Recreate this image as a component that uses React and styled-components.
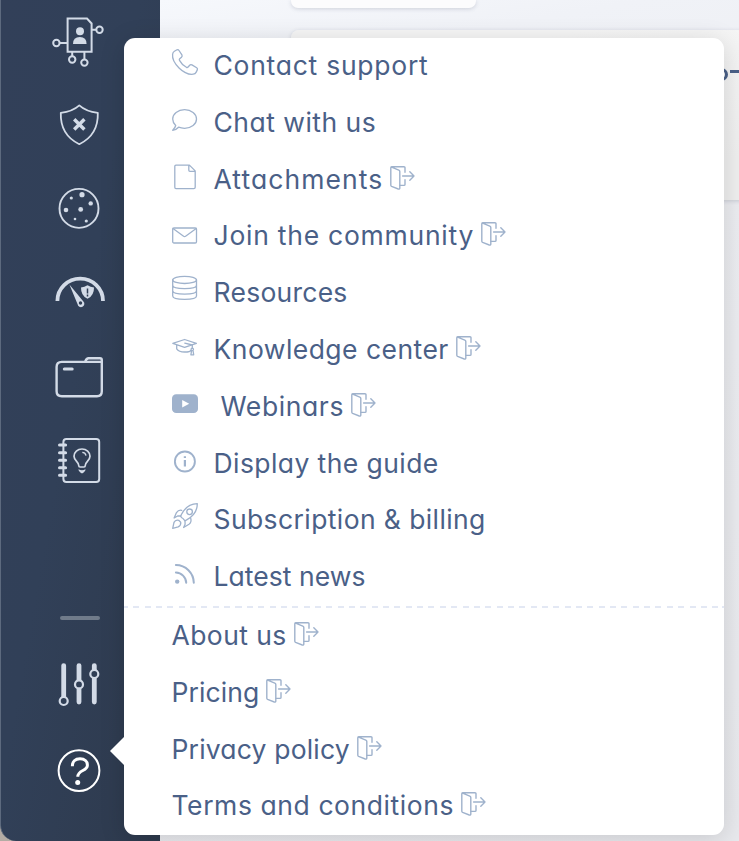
import React from "react";
import styled, { createGlobalStyle } from "styled-components";

const GlobalStyle = createGlobalStyle`
  *, *::before, *::after { box-sizing: border-box; }
  body { margin: 0; overflow: hidden; }
`;

const Page = styled.div`
  position: relative;
  display: flex;
  width: 739px;
  height: 841px;
  overflow: hidden;
  background: #b3aca4;
  font-family: Inter, "Open Sans", sans-serif;
`;

const Sidebar = styled.nav`
  display: flex;
  flex: none;
  flex-direction: column;
  width: 160px;
  height: 841px;
  border-left: 1px solid #5d6a7e;
  border-bottom-left-radius: 16px;
  background: linear-gradient(100deg, #324059 0%, #314058 45%, #2e3a4d 100%);
`;

const NavItem = styled.a`
  display: flex;
  flex: none;
  align-items: center;
  justify-content: center;
  height: ${(p) => p.$height || 84}px;
  margin-left: -1px;
  color: ${(p) => (p.$active ? "#ffffff" : "#d3dbe7")};

  &:first-child { margin-top: -1px; }
`;

const NavIcon = styled.svg`
  width: 60px;
  height: 60px;
  fill: none;
  stroke: currentColor;
  stroke-width: ${(p) => p.$stroke || 2};
  stroke-linejoin: round;
`;

const NavDivider = styled.hr`
  flex: none;
  width: 40px;
  height: 4px;
  margin: 113px 0 21px 59px;
  border: 0;
  border-radius: 2px;
  background: #707b8a;
`;

const Main = styled.main`
  display: flex;
  flex: 1;
  flex-direction: column;
  gap: 22px;
  min-width: 0;
  padding-left: 131px;
  background: linear-gradient(170deg, #f6f8fc 0%, #f0f2f7 9%, #ecedf1 30%, #e8e9ed 100%);
`;

const Card = styled.section`
  display: flex;
  flex: none;
  align-items: flex-start;
  width: ${(p) => p.$width}px;
  height: ${(p) => p.$height}px;
  border-radius: ${(p) => p.$radius};
  background: ${(p) => p.$fill};
  box-shadow: 0 1px 4px rgba(60, 70, 100, 0.2);
`;

const ChartNode = styled.span`
  flex: none;
  width: 13px;
  height: 13px;
  margin: 38px 2px 0 424px;
  border: 3px solid #4a6087;
  border-radius: 50%;
`;

const ChartLine = styled.span`
  width: 30px;
  height: 3px;
  margin-top: 40px;
  background: #4a6087;
`;

const Menu = styled.aside`
  position: absolute;
  top: 38px;
  left: 124px;
  width: 600px;
  height: 797px;
  border-radius: 11px;
  background: #ffffff;
  box-shadow: 0 4px 26px rgba(0, 0, 0, 0.14);

  &::before {
    content: "";
    position: absolute;
    top: 699px;
    left: -14px;
    border: solid transparent;
    border-width: 14px 14px 14px 0;
    border-right-color: #ffffff;
  }
`;

const MenuList = styled.ul`
  margin: 0;
  padding: 0;
  list-style: none;
`;

const MenuDivider = styled.div`
  height: 2px;
  background: repeating-linear-gradient(90deg, #e3e8f4 0 6px, transparent 6px 11.35px);
  background-position-x: -2px;
`;

const MenuRow = styled.li`
  display: flex;
  align-items: flex-start;
  height: 56.8px;
  padding-left: 48px;
`;

const RowIcon = styled.svg`
  flex: none;
  width: 26px;
  height: 26px;
  margin: 11px 16px 0 0;
  overflow: visible;
  fill: none;
  stroke: #9fb2cc;
  stroke-width: 1.3;
  stroke-linejoin: round;
  stroke-linecap: round;
`;

const Label = styled.span`
  margin-left: ${(p) => (p.$indent ? 6.5 : -0.5)}px;
  color: #4a6087;
  font-size: 26.5px;
  line-height: 55px;
  letter-spacing: ${(p) => p.$tracking}px;
  font-feature-settings: "cv11";
  white-space: nowrap;
`;

const ExitGlyph = styled.svg`
  flex: none;
  width: 25px;
  height: 24px;
  margin: 14px 0 0 7px;
  fill: none;
  stroke: #9fb2cc;
  stroke-width: 1.4;
  stroke-linejoin: round;
  stroke-linecap: round;
`;

const ExitIcon = () => (
  <ExitGlyph viewBox="0 0 25 24">
    <path d="M15 6.3V1.8Q15 .8 14 .8H1.6Q.8.8.8 1.7V19.2Q.8 20 1.6 20.4L8.3 23Q9.8 23.4 9.8 22V5.5Q9.8 4.5 8.8 4.1L1 .9" />
    <path d="M10 19.4H14Q15 19.4 15 18.4V13.7M12.6 10H24M19.8 5.8L24 10L19.8 14.2" />
  </ExitGlyph>
);

const icons = {
  phone: (
    <path d="M2.4 2.2L5 .8Q6.2.3 7 1.5L9.9 5.9Q10.6 7.2 9.5 8.2L7.7 9.8Q7 10.5 7.5 11.4Q9.8 15.8 14.4 18.3Q15.4 18.8 16.1 18L17.7 16.2Q18.6 15.2 19.9 15.9L24.7 18.7Q25.9 19.5 25.3 20.9L24.2 23.1Q23.3 25 21.2 25.2C12 26.4-.5 14 .6 5.2Q.8 3.1 2.4 2.2Z" />
  ),
  chat: (
    <path d="M12.6 3.7C19.4 3.7 24.5 7.8 24.5 13S19.4 22.3 12.6 22.3Q9.3 22.3 6.6 21.2Q3.8 24.1.7 24.3Q3.2 21.9 3.7 19.5Q.7 16.7.7 13C.7 7.8 5.8 3.7 12.6 3.7Z" />
  ),
  file: <path d="M4 2.1H17.4L23.2 7.9V24.2Q23.2 25.6 21.8 25.6H4Q2.8 25.6 2.8 24.2V3.5Q2.8 2.1 4 2.1ZM16.8 2.3V7.2Q16.8 8.3 17.9 8.3H23" />,
  mail: (
    <>
      <rect x=".7" y="9" width="23.8" height="15" rx="1.3" />
      <path d="M1 9.5L11.6 17.2Q12.6 17.9 13.6 17.2L24.2 9.5" />
    </>
  ),
  database: (
    <>
      <ellipse cx="12.6" cy="3.9" rx="11.9" ry="3.6" />
      <path d="M.7 4V20C.7 24.6 24.5 24.6 24.5 20V4M.7 9.3C.7 13.8 24.5 13.8 24.5 9.3M.7 14.7C.7 19.2 24.5 19.2 24.5 14.7" />
    </>
  ),
  cap: (
    <path d="M.8 10.3L12.6 6.5L24.4 10.3L12.6 14.4ZM4.7 12V15.8Q6.8 19 12.6 19T18.6 17.3M12.8 10.2L20.3 12V15.3M20.3 15.2A1.2 1.2 0 1 1 20.2 15.2M19.5 18L18.9 21.8H21.7L21.1 18" />
  ),
  video: (
    <>
      <rect x="0" y="4.3" width="26" height="18.8" rx="4.2" fill="#9fb2cc" stroke="none" />
      <path d="M10.2 10L17.2 13.7L10.2 17.4Z" fill="#fff" stroke="none" />
    </>
  ),
  info: (
    <>
      <circle cx="12.9" cy="14.5" r="10" strokeWidth="1.9" />
      <path d="M12.9 13V19.4M12.9 9.2V11" strokeWidth="2.2" strokeLinecap="butt" />
    </>
  ),
  rocket: (
    <>
      <path d="M9.4 11.5C13 4.5 18 .8 25.3.7C25.3 8 21.5 13.3 14.3 17.1L13 17.8Q11.8 16.7 11 15.5Q9.3 14.8 8.6 13.2Z" />
      <circle cx="17.6" cy="8.8" r="2.8" />
      <path d="M9.7 7.3Q6.5 6.6 4.5 9.6L2.1 15L5.6 13L8.8 13M18.7 15.2Q19.9 19.1 17 21.2L11.6 24.5L13.1 21.3L13 17.8M6.7 17.3Q3.4 16.5 2 19.4L.7 25.3L6.2 23.9Q9.2 22.4 8.7 19.2L6.7 17.3Z" />
    </>
  ),
  rss: (
    <>
      <circle cx="5.2" cy="21.6" r="2.2" fill="#9fb2cc" stroke="none" />
      <path d="M3.9 12.6A10.6 10.6 0 0 1 14.2 22.8M3.9 5.1A18 18 0 0 1 21.8 22.8" strokeWidth="2" />
    </>
  ),
};

const support = [
  { label: "Contact support", icon: "phone", tracking: 0.74 },
  { label: "Chat with us", icon: "chat", tracking: 0.48 },
  { label: "Attachments", icon: "file", tracking: 1.07, external: true },
  { label: "Join the community", icon: "mail", tracking: 0.75, external: true },
  { label: "Resources", icon: "database", tracking: 0.26 },
  { label: "Knowledge center", icon: "cap", tracking: 0.46, external: true },
  { label: "Webinars", icon: "video", tracking: 0.6, external: true, indent: true },
  { label: "Display the guide", icon: "info", tracking: 0.42 },
  { label: "Subscription & billing", icon: "rocket", tracking: 0.4 },
  { label: "Latest news", icon: "rss", tracking: 0.06 },
];

const company = [
  { label: "About us", tracking: 0.42, external: true },
  { label: "Pricing", tracking: 0.08, external: true },
  { label: "Privacy policy", tracking: 0.18, external: true },
  { label: "Terms and conditions", tracking: 0.58, external: true },
];

const MenuItem = ({ item }) => (
  <MenuRow>
    {item.icon && <RowIcon viewBox="0 0 26 26">{icons[item.icon]}</RowIcon>}
    <Label $tracking={item.tracking} $indent={item.indent}>{item.label}</Label>
    {item.external && <ExitIcon />}
  </MenuRow>
);

const IdentityIcon = () => (
  <NavIcon viewBox="0 0 60 60">
    <path d="M17.6 7.6H37L41.6 12.5V40.8H17.6ZM41.6 18.8H46.2M17.4 32H9.8M22.2 41V45.2M34.4 41V48.2" strokeLinejoin="miter" />
    <circle cx="49.5" cy="18.8" r="3.2" />
    <circle cx="6.4" cy="32" r="3.2" />
    <circle cx="22.2" cy="48.5" r="3.2" />
    <circle cx="34.4" cy="51.6" r="3.2" />
    <circle cx="30" cy="20.2" r="4" fill="currentColor" stroke="none" />
    <path d="M23 33Q23 26 29.8 26T36.6 33Z" fill="currentColor" stroke="none" />
  </NavIcon>
);

const ShieldIcon = () => (
  <NavIcon viewBox="0 0 60 60" $stroke={1.8}>
    <path d="M29.3 10.4Q36 16.5 47.8 17.9Q48.5 40 29.3 49.2Q10.1 40 10.8 17.9Q22.6 16.5 29.3 10.4Z" />
    <path d="M24.2 24.3L34.4 34.5M34.4 24.3L24.2 34.5" strokeWidth="3.4" />
  </NavIcon>
);

const CookieIcon = () => (
  <NavIcon viewBox="0 0 60 60" $stroke={1.9}>
    <circle cx="29" cy="29.4" r="19.5" />
    <g fill="currentColor" stroke="none">
      <circle cx="32" cy="15.7" r="2.6" />
      <circle cx="21.3" cy="19" r="1.6" />
      <circle cx="40.7" cy="24.4" r="2.2" />
      <circle cx="16" cy="31" r="2.3" />
      <circle cx="30.7" cy="30.4" r="2.4" />
      <circle cx="25" cy="40" r="1.3" />
      <circle cx="36.3" cy="42" r="1.6" />
    </g>
  </NavIcon>
);

const GaugeIcon = () => (
  <NavIcon viewBox="0 0 60 60">
    <path d="M7.4 38A22.8 22.3 0 0 1 53 38" strokeWidth="3.8" />
    <path d="M19.4 21.6L33.4 38.4A3.4 3.4 0 1 1 27.6 41.2Z" fill="currentColor" stroke="none" />
    <circle cx="30.5" cy="40" r="1.7" fill="#303f56" stroke="none" />
    <path d="M37.5 22.2Q40.5 24.3 44 24.4Q44.2 32.5 37.5 35.8Q30.8 32.5 31 24.4Q34.5 24.3 37.5 22.2Z" fill="currentColor" stroke="none" />
    <path d="M37.5 25.6V30.4M37.5 31.6V33.4" stroke="#303f56" strokeWidth="1.5" />
  </NavIcon>
);

const FolderIcon = () => (
  <NavIcon viewBox="0 0 60 60" $stroke={2.4}>
    <path d="M35 14.9H11.8Q6.6 14.9 6.6 20V44.2Q6.6 49.2 11.8 49.2H47Q51.8 49.2 51.8 44.2V13Q51.8 11.3 50 11.3H38.6Q36.4 11.3 35 14.9H51.6" />
    <path d="M14.3 22H22.2" strokeWidth="3" strokeLinecap="round" />
  </NavIcon>
);

const NotebookIcon = () => (
  <NavIcon viewBox="0 0 60 60" $stroke={2}>
    <rect x="13.4" y="8.1" width="35.8" height="42.8" rx="3" />
    <path d="M9.5 14H15.6M9.5 21.7H15.6M9.5 29.2H15.6M9.5 36.8H15.6M9.5 44.3H15.6" strokeWidth="3" strokeLinecap="round" />
    <path d="M28.8 34.8C28.8 30.5 24 29.7 24 25.3A8 7.3 0 0 1 40 25.3C40 29.7 35.2 30.5 35.2 34.8Q35.2 36 34 36H30Q28.8 36 28.8 34.8Z" strokeWidth="1.7" />
    <path d="M32.3 21.3Q35.5 21.5 36 24.7" strokeWidth="1.3" />
    <path d="M28.5 38.2Q32 40.5 35.5 38.2Q35.8 40.2 32 42.6Q28.2 40.2 28.5 38.2Z" fill="currentColor" stroke="none" />
  </NavIcon>
);

const SlidersIcon = () => (
  <NavIcon viewBox="0 0 60 60" $stroke={2.2}>
    <path d="M13.7 11.6V44M29 11.6V48M44.3 11.6V48" strokeWidth="4.8" strokeLinecap="round" />
    <g fill="#303f56">
      <circle cx="13.7" cy="47" r="4" />
      <circle cx="29" cy="30.4" r="4" />
      <circle cx="44.3" cy="20" r="4" />
    </g>
  </NavIcon>
);

const HelpIcon = () => (
  <NavIcon viewBox="0 0 60 60" $stroke={2}>
    <circle cx="29" cy="30.6" r="20.4" />
    <path d="M22.4 26.3C22.2 21.4 25.2 18.8 30 18.8C34.7 18.8 37.4 21.5 37.4 25.2C37.4 31.4 27.8 29.6 27.8 36.8" strokeWidth="3" />
    <circle cx="27.7" cy="42.6" r="2.5" fill="currentColor" stroke="none" />
  </NavIcon>
);

const navigation = [
  { name: "Identity", Icon: IdentityIcon },
  { name: "Protection", Icon: ShieldIcon },
  { name: "Cookies", Icon: CookieIcon },
  { name: "Risk", Icon: GaugeIcon },
  { name: "Documents", Icon: FolderIcon },
  { name: "Knowledge", Icon: NotebookIcon },
];

export default function App() {
  return (
    <Page>
      <GlobalStyle />
      <Sidebar>
        {navigation.map(({ name, Icon }) => (
          <NavItem key={name}><Icon /></NavItem>
        ))}
        <NavDivider />
        <NavItem $height={86}><SlidersIcon /></NavItem>
        <NavItem $height={86} $active><HelpIcon /></NavItem>
      </Sidebar>
      <Main>
        <Card $width={185} $height={8} $radius="0 0 7px 7px" $fill="#fcfcfd" />
        <Card $width={500} $height={170} $radius="8px" $fill="linear-gradient(170deg, #f6f6f6 20%, #efefef 80%)">
          <ChartNode />
          <ChartLine />
        </Card>
      </Main>
      <Menu>
        <MenuList>
          {support.map((item) => <MenuItem key={item.label} item={item} />)}
        </MenuList>
        <MenuDivider />
        <MenuList>
          {company.map((item) => <MenuItem key={item.label} item={item} />)}
        </MenuList>
      </Menu>
    </Page>
  );
}
